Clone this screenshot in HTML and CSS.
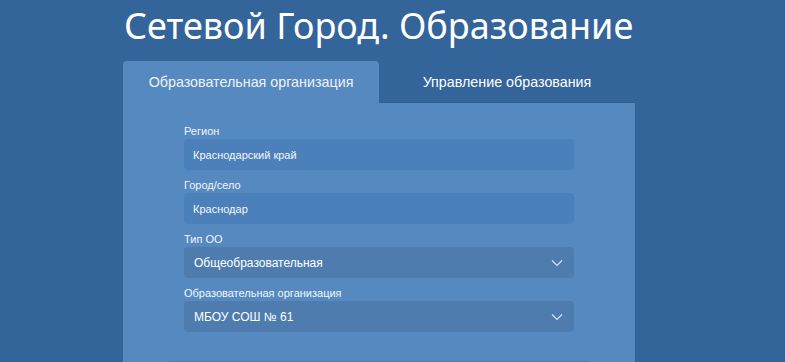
FILE: index.html
```html
<!DOCTYPE html>
<html lang="ru">
<head>
    <meta charset="UTF-8">
    <meta name="viewport" content="width=device-width, initial-scale=1.0">
    <title>Сетевой Город. Образование</title>
    <link rel="stylesheet" href="styles.css">
</head>
<body>

<div class="container">
    <h1>Сетевой Город. Образование</h1>

    <div class="tabs">
        <div class="tab active">Образовательная организация</div>
        <div class="tab">Управление образования</div>
    </div>

    <div class="panel">
        <div class="field">
            <label>Регион</label>
            <div class="input">Краснодарский край</div>
        </div>
        <div class="field">
            <label>Город/село</label>
            <div class="input">Краснодар</div>
        </div>
        <div class="field">
            <label>Тип ОО</label>
            <div class="select">
                <span>Общеобразовательная</span>
                <svg class="chevron" width="12" height="8" viewBox="0 0 12 8"><path d="M1 1.5 L6 6.5 L11 1.5" fill="none" stroke="#d6e2ee" stroke-width="1.2"/></svg>
            </div>
        </div>
        <div class="field">
            <label>Образовательная организация</label>
            <div class="select">
                <span>МБОУ СОШ № 61</span>
                <svg class="chevron" width="12" height="8" viewBox="0 0 12 8"><path d="M1 1.5 L6 6.5 L11 1.5" fill="none" stroke="#d6e2ee" stroke-width="1.2"/></svg>
            </div>
        </div>
        <div class="divider"></div>
    </div>
</div>

</body>
</html>
```

FILE: styles.css
```css
body {
    margin: 0;
    background-color: #33649a;
    font-family: "Liberation Sans", Arial, sans-serif;
    color: #fff;
    overflow: hidden;
}

.container {
    width: 513px;
    margin-left: 123px;
}

h1 {
    margin: 0;
    padding: 6px 0 0 1px;
    height: 61px;
    box-sizing: border-box;
    font-family: "Noto Sans", sans-serif;
    font-weight: normal;
    font-size: 36px;
    line-height: 40px;
    color: #fff;
    white-space: nowrap;
}

.tabs {
    display: flex;
    height: 42px;
}

.tab {
    width: 256px;
    display: flex;
    align-items: center;
    justify-content: center;
    font-size: 14.3px;
    color: #fff;
}

.tab.active {
    background-color: #5689bf;
    border-radius: 4px 4px 0 0;
    color: #eef3f9;
}

.tab:not(.active) {
    border-bottom: 1px solid #2f5d8f;
}

.panel {
    background-color: #5689bf;
    border-right: 1px solid #2f5f93;
    padding: 21px 61px 0 61px;
    height: 238px;
}

.field {
    margin-bottom: 8px;
}

.field label {
    display: block;
    font-size: 11px;
    line-height: 15px;
    color: #f2f6fa;
}

.input, .select {
    height: 31px;
    border-radius: 4px;
    display: flex;
    align-items: center;
    box-sizing: border-box;
}

.input {
    background-color: #4b80ba;
    padding-left: 9px;
    font-size: 11px;
    color: #f4f7fb;
}

.select {
    background-color: #4e7cae;
    padding: 0 11px 0 10px;
    font-size: 12px;
    justify-content: space-between;
}

.divider {
    margin: 29px -15px 0;
    height: 1px;
    background-color: #4a7db2;
}
```
